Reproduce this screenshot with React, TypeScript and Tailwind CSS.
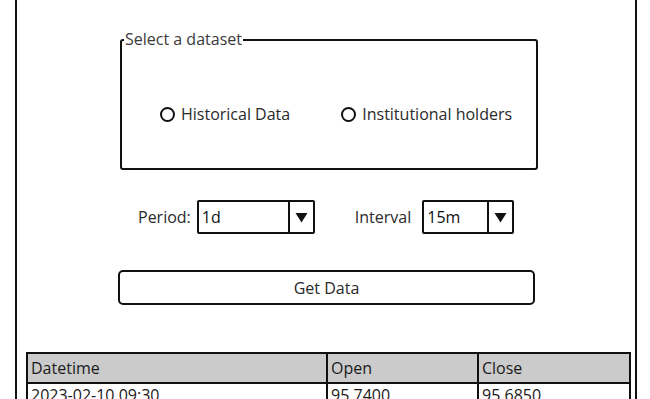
import React from "react";

const font = { fontFamily: '"Open Sans", "Noto Sans", sans-serif' };

function Radio({ label }: { label: string }) {
  return (
    <label className="flex items-center gap-[6px]">
      <span className="h-[15px] w-[15px] rounded-full border-[2.5px] border-[#111]" />
      <span className="text-[16px] text-[#2a2a2a]">{label}</span>
    </label>
  );
}

function Select({ value, width }: { value: string; width: string }) {
  return (
    <div className={`flex h-[34px] shrink-0 items-stretch rounded-[2px] border-2 border-[#111] ${width}`}>
      <span className="flex-1 pl-[3px] pt-[5px] text-[16px] leading-[20px] text-[#111]">{value}</span>
      <span className="flex w-[25px] items-center justify-center border-l-2 border-[#111]">
        <svg width="13" height="11" viewBox="0 0 13 11">
          <path d="M0.5 1 L12.5 1 L6.5 10.5 Z" fill="#111" />
        </svg>
      </span>
    </div>
  );
}

export default function App() {
  return (
    <div className="h-[399px] w-[650px] overflow-hidden bg-white" style={font}>
      <div className="ml-[15px] flex h-[399px] w-[622px] flex-col overflow-hidden border-x-2 border-[#111]">
        <fieldset className="ml-[103px] mt-[31px] h-[139px] w-[418px] shrink-0 rounded-[3px] border-2 border-[#111] px-0">
          <legend className="ml-[2px] px-[1px] text-[16px] leading-[17px] text-[#3a3a3a]">
            Select a dataset
          </legend>
          <div className="mt-[54px] flex items-center gap-[51px] pl-[38px]">
            <Radio label="Historical Data" />
            <Radio label="Institutional holders" />
          </div>
        </fieldset>

        <div className="ml-[121px] mt-[30px] flex shrink-0 items-center">
          <span className="mr-[6px] text-[16px] text-[#2a2a2a]">Period:</span>
          <Select value="1d" width="w-[118px]" />
          <span className="ml-[40px] mr-[11px] text-[16px] text-[#2a2a2a]">Interval</span>
          <Select value="15m" width="w-[92px]" />
        </div>

        <button className="ml-[101px] mt-[36px] h-[35px] w-[417px] shrink-0 rounded-[5px] border-2 border-[#111] text-[16px] text-[#2a2a2a]">
          Get Data
        </button>

        <table className="ml-[9px] mt-[47px] w-[605px] shrink-0 border-collapse text-[16px] text-[#1a1a1a]">
          <thead>
            <tr className="h-[30px] bg-[#cbcbcb]">
              <th className="w-[300px] border-2 border-[#111] pl-[3px] text-left font-normal">Datetime</th>
              <th className="w-[151px] border-2 border-[#111] pl-[3px] text-left font-normal">Open</th>
              <th className="border-2 border-[#111] pl-[3px] text-left font-normal">Close</th>
            </tr>
          </thead>
          <tbody>
            <tr className="h-[30px]">
              <td className="border-x-2 border-[#111] pl-[3px] align-top leading-[22px]">2023-02-10 09:30</td>
              <td className="border-x-2 border-[#111] pl-[3px] align-top leading-[22px]">95.7400</td>
              <td className="border-x-2 border-[#111] pl-[3px] align-top leading-[22px]">95.6850</td>
            </tr>
          </tbody>
        </table>
      </div>
    </div>
  );
}
